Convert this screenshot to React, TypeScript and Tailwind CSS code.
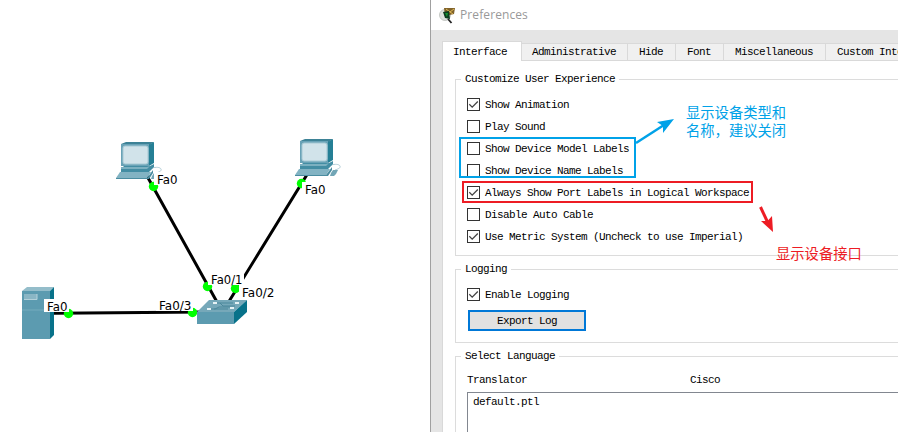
import React from 'react';

const mono =
  "font-['Liberation_Mono','Noto_Sans_CJK_SC',monospace] text-[11px] leading-[14px] tracking-[-0.6px] whitespace-pre text-black";

function Check({ label, checked = false }: { label: string; checked?: boolean }) {
  return (
    <label className="flex h-[22px] items-start gap-[5px] pt-[4px]">
      <span className="flex h-[13px] w-[13px] shrink-0 border border-[#333] bg-white">
        {checked && (
          <svg viewBox="0 0 11 11" className="h-[11px] w-[11px]">
            <path d="M1.3 5.3 4.2 8.2 9.8 2.5" fill="none" stroke="#444" strokeWidth="1.3" />
          </svg>
        )}
      </span>
      <span>{label}</span>
    </label>
  );
}

function Group({ title, className, children }: { title: string; className: string; children: React.ReactNode }) {
  return (
    <section className={`flex flex-col border border-r-0 border-[#dcdcdc] pl-[11px] ${className}`}>
      <h2 className="-ml-[6px] -mt-[8px] h-[14px] shrink-0 self-start bg-white pl-[4px] pr-[4px]">{title}</h2>
      {children}
    </section>
  );
}

function Tab({ children, width }: { children: string; width: string }) {
  return (
    <div className={`flex h-[18px] shrink-0 items-center border-b border-r border-t border-[#d9d9d9] bg-[#f0f0f0] pl-[10px] ${width}`}>
      {children}
    </div>
  );
}

function Computer({ x, y }: { x: number; y: number }) {
  return (
    <g transform={`translate(${x} ${y})`}>
      <path d="M36 26c4-1 8-1 9 1s-2 3-5 4" fill="none" stroke="#b4ced7" />
      <path d="M36 34l2-3h5l-2 4-2 2h-4z" fill="#72a6b6" />
      <path d="M5 2 10 0H38L34 3H5z" fill="#3d8296" />
      <path d="M33 3 38 0V21L33 24z" fill="#257f95" />
      <path d="M5 2H33V24H5z" fill="#68a2b6" />
      <rect x="7" y="4" width="25" height="18" rx="2" fill="#d1e3ea" stroke="#a7c9d4" />
      <path d="M8 24H34L38 22V25L33 30H5V27z" fill="#438da3" />
      <path d="M5 25H31L34 24 31 27H5z" fill="#7bb0c0" />
      <path d="M4 30H35L31 36H0z" fill="#82b3c3" />
      <path d="M31 36 37 28V31L33 37H0V36z" fill="#4a8ca0" />
    </g>
  );
}

function PortLabel({ x, y, w, text }: { x: number; y: number; w: number; text: string }) {
  return (
    <>
      <rect x={x - 4} y={y - 11} width={w + 6} height={13} fill="#fff" />
      <text x={x - 1} y={y + 0.5} textLength={w + 1.5} lengthAdjust="spacingAndGlyphs" fontSize="11.5" fill="#000">
        {text}
      </text>
    </>
  );
}

function Topology() {
  return (
    <svg width="430" height="432" viewBox="0 0 430 432" className="block shrink-0 font-['DejaVu_Sans',sans-serif]">
      <g stroke="#000" strokeWidth="3">
        <path d="M147 176 217 302M308 173 228 303M54 313.3 205 312" />
      </g>
      <g fill="#0f0">
        <circle cx="153.500" cy="186.500" r="4.700" />
        <circle cx="301.500" cy="183.500" r="4.700" />
        <circle cx="207.500" cy="286.500" r="4.700" />
        <circle cx="235.500" cy="288.500" r="4.700" />
        <circle cx="68.500" cy="313.500" r="4.700" />
        <circle cx="192.500" cy="312.500" r="4.700" />
      </g>
      <Computer x={116} y={142} />
      <Computer x={295} y={139} />
      <g>
        <path d="M22 291 27 287H54L50 291z" fill="#94bdca" />
        <path d="M50 291 54 287V335L50 339z" fill="#08728a" />
        <path d="M22 291H50V339H22z" fill="#5c9bb0" />
        <path d="M22 310H50" stroke="#75acbd" />
        <path d="M24 294H37V300H24z" fill="#8ab6c5" />
        <path d="M24 299.500H37V294" fill="none" stroke="#b4d1da" />
      </g>
      <PortLabel x={158} y={183} w={19} text="Fa0" />
      <PortLabel x={306} y={193} w={19} text="Fa0" />
      <PortLabel x={212} y={283} w={30} text="Fa0/1" />
      <PortLabel x={243} y={296} w={31} text="Fa0/2" />
      <PortLabel x={160} y={309} w={31} text="Fa0/3" />
      <PortLabel x={48} y={310} w={19} text="Fa0" />
      <g>
        <path d="M197 312 209 300H247L234 312z" fill="#76a8b9" />
        <path d="M234 312 247 300V312L234 324z" fill="#08728a" />
        <path d="M197 312H234V324H197z" fill="#5c9bb0" />
        <path d="M215 303H220L223 306H235M209 309H215L219 307H230M214 309H228M220 303H233" fill="none" stroke="#4a879b" />
        <path d="M213 303h4M235 303h4M207 309h4M230 308h4" stroke="#e7f2f5" strokeWidth="2" />
      </g>
    </svg>
  );
}

function Preferences() {
  return (
    <div className="flex min-w-0 flex-1 flex-col border-l border-[#a0a0a0] bg-[#e5e5e5]">
      <header className="flex h-[30px] shrink-0 items-center gap-[4px] bg-white pl-[8px]">
        <svg width="17" height="17" viewBox="0 0 17 17">
          <circle cx="6" cy="8" r="5.500" fill="#dfe3df" stroke="#c6c9c5" />
          <path d="M5 1 16 1 15 7 6 9z" fill="#806229" />
          <path d="M7 2 11 5 15 2M11 5l3 2" stroke="#dfb956" fill="none" />
          <path d="M4 5 10 4 11 12 6 11z" fill="#0c3d1e" />
          <path d="M6 6 9 6 8 10z" fill="#159331" />
          <path d="M9 12 12.500 16" stroke="#222" strokeWidth="1.800" />
        </svg>
        <h1 className="font-['Open_Sans','Noto_Sans',sans-serif] text-[12px] leading-[16px] tracking-[0.1px] text-[#999]">Preferences</h1>
      </header>
      <div className={`flex min-h-0 flex-1 flex-col pl-[11px] pt-[11px] ${mono}`}>
        <nav className="flex h-[20px] shrink-0 items-end overflow-hidden">
          <div className="flex h-[20px] w-[80px] shrink-0 items-center border border-b-0 border-[#d9d9d9] bg-white pl-[10px]">Interface</div>
          <Tab width="w-[106px]">Administrative</Tab>
          <Tab width="w-[48px] !pl-[11px]">Hide</Tab>
          <Tab width="w-[48px] !pl-[11px]">Font</Tab>
          <Tab width="w-[102px] !pl-[11px]">Miscellaneous</Tab>
          <Tab width="w-[130px] !pl-[11px]">Custom Interface</Tab>
        </nav>
        <main className="flex min-h-0 flex-1 flex-col gap-[13px] overflow-hidden border-l border-[#d9d9d9] bg-white pl-[12px] pt-[18px]">
          <Group title="Customize User Experience" className="h-[177px] shrink-0">
            <div className="pt-[8px]">
              <Check label="Show Animation" checked />
              <Check label="Play Sound" />
              <Check label="Show Device Model Labels" />
              <Check label="Show Device Name Labels" />
              <Check label="Always Show Port Labels in Logical Workspace" checked />
              <Check label="Disable Auto Cable" />
              <Check label="Use Metric System (Uncheck to use Imperial)" checked />
            </div>
          </Group>
          <Group title="Logging" className="h-[74px] shrink-0">
            <div className="pt-[8px]">
              <Check label="Enable Logging" checked />
            </div>
            <button className="ml-[1px] mt-[4px] flex h-[21px] w-[118px] shrink-0 items-center justify-center border-2 border-[#0078d7] bg-[#e1e1e1]">
              Export Log
            </button>
          </Group>
          <Group title="Select Language" className="min-h-0 flex-1 border-b-0">
            <div className="flex h-[29px] shrink-0 items-center pt-[5px]">
              <span className="w-[223px]">Translator</span>
              <span>Cisco</span>
            </div>
            <div className="min-h-0 flex-1 border-l border-t border-[#828790] pl-[5px] pt-[2px]">default.ptl</div>
          </Group>
        </main>
      </div>
    </div>
  );
}

function Annotations() {
  const note = "absolute font-['Noto_Sans_CJK_SC',sans-serif] text-[14.3px] leading-[18px] font-normal whitespace-nowrap";
  return (
    <>
      <div className="absolute left-[459px] top-[137px] h-[41px] w-[177px] border-2 border-[#00a2e8]" />
      <div className="absolute left-[462px] top-[181px] h-[22px] w-[291px] border-2 border-[#ed1c24]" />
      <svg className="absolute left-[630px] top-[110px]" width="160" height="130" viewBox="630 110 160 130">
        <path d="M636 143 664 125" stroke="#00a2e8" strokeWidth="2.500" />
        <path d="M674 119 657 122 663 126 663 133z" fill="#00a2e8" />
        <path d="M760.500 207 768 223" stroke="#ed1c24" strokeWidth="3" />
        <path d="M773 232 761 221 767.500 221 772 216z" fill="#ed1c24" />
      </svg>
      <p className={`${note} left-[686px] top-[103px] text-[#00a2e8]`}>
        显示设备类型和
        <br />
        名称，建议关闭
      </p>
      <p className={`${note} left-[776px] top-[244px] text-[#ed1c24]`}>显示设备接口</p>
    </>
  );
}

export default function App() {
  return (
    <div className="relative flex h-[432px] w-[898px] overflow-hidden bg-white">
      <Topology />
      <Preferences />
      <Annotations />
    </div>
  );
}
